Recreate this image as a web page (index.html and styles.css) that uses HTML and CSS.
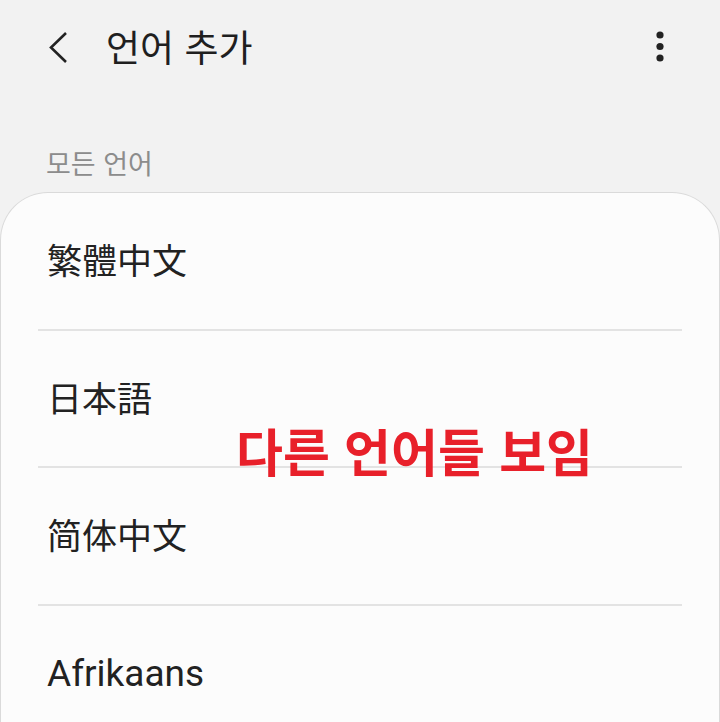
FILE: index.html
```html
<!DOCTYPE html>
<html lang="ko">
<head>
<meta charset="utf-8">
<link rel="stylesheet" href="styles.css">
</head>
<body>
<div class="screen">
  <header class="appbar">
    <svg class="back" width="24" height="34" viewBox="0 0 24 34"><path d="M19 2 L4 16.5 L19 31" fill="none" stroke="#222" stroke-width="2.6" stroke-linecap="butt" stroke-linejoin="miter"/></svg>
    <h1 class="title">언어 추가</h1>
    <svg class="more" width="10" height="34" viewBox="0 0 10 34"><circle cx="5" cy="5" r="3.6" fill="#222"/><circle cx="5" cy="16.5" r="3.6" fill="#222"/><circle cx="5" cy="28" r="3.6" fill="#222"/></svg>
  </header>
  <div class="section">모든 언어</div>
  <main class="card">
    <div class="row"><span class="cjk-tc">繁體中文</span></div>
    <div class="row"><span class="cjk-jp">日本語</span></div>
    <div class="row"><span class="cjk-sc">简体中文</span></div>
    <div class="row last"><span class="latin">Afrikaans</span></div>
  </main>
  <div class="note">다른 언어들 보임</div>
</div>
</body>
</html>
```
FILE: styles.css
```css
html, body {
  margin: 0;
  padding: 0;
}
body {
  width: 720px;
  height: 722px;
  overflow: hidden;
  background: #f2f2f2;
  font-family: Roboto, "Noto Sans CJK KR", sans-serif;
  color: #222;
}
.screen {
  position: relative;
  width: 720px;
  height: 722px;
  display: flex;
  flex-direction: column;
  overflow: hidden;
}
.appbar {
  flex: 0 0 96px;
  height: 96px;
  display: flex;
  align-items: center;
  padding: 0 0 0 47px;
  box-sizing: border-box;
}
.back {
  display: block;
  margin-top: -1px;
}
.title {
  margin: -3px 0 0 35px;
  font-family: "Noto Sans CJK KR", sans-serif;
  font-weight: 400;
  font-size: 37px;
  line-height: 1;
  color: #1f1f1f;
  flex: 1;
}
.more {
  display: block;
  margin-right: 55px;
  margin-top: -2px;
}
.section {
  flex: 0 0 96px;
  height: 96px;
  box-sizing: border-box;
  padding: 52px 0 0 46px;
  font-family: "Noto Sans CJK KR", sans-serif;
  font-size: 27px;
  line-height: 30px;
  color: #8c8c8c;
}
.card {
  flex: 1 0 auto;
  background: #fcfcfc;
  border: 1px solid #dadada;
  border-bottom: none;
  border-radius: 48px 48px 0 0;
  padding: 0 37px;
}
.row {
  height: 135.5px;
  border-bottom: 2px solid #e3e3e3;
  display: flex;
  align-items: center;
  padding-left: 9px;
  color: #222;
}
.row.last {
  border-bottom: none;
}
.latin { font-family: Roboto, sans-serif; font-size: 37px; }
.cjk-tc { font-family: "Noto Sans CJK TC", sans-serif; font-size: 35px; margin-top: -4px; }
.cjk-jp { font-family: "Noto Sans CJK JP", sans-serif; font-size: 35px; margin-top: -4px; }
.cjk-sc { font-family: "Noto Sans CJK SC", sans-serif; font-size: 35px; margin-top: -4px; }
.note {
  position: absolute;
  left: 236px;
  top: 420px;
  font-family: "Noto Sans CJK KR", sans-serif;
  font-weight: 700;
  font-size: 51px;
  line-height: 60px;
  color: #e8202a;
}
```
